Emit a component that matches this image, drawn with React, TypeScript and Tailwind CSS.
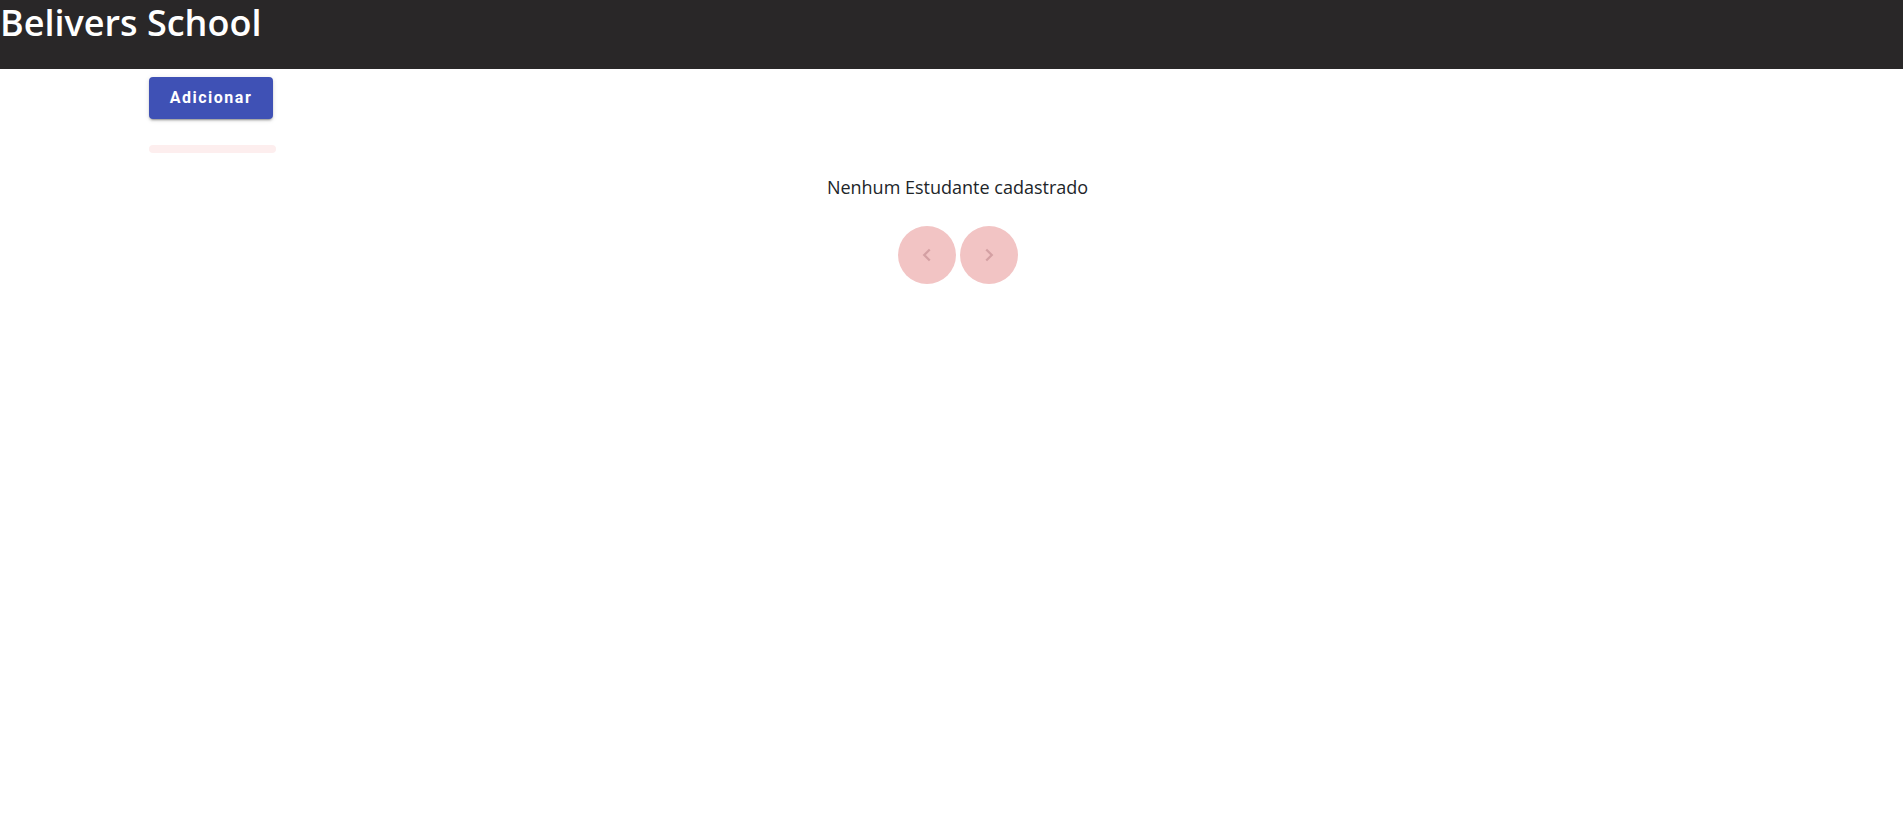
import React from 'react';

const App: React.FC = () => {
  return (
    <div className="min-h-screen bg-white" style={{ fontFamily: '"Open Sans", sans-serif' }}>
      <header className="h-[69px] bg-[#292728]">
        <h1 className="text-[36px] leading-[46px] font-semibold text-white">Belivers School</h1>
      </header>

      <main className="pl-[149px]">
        <button
          type="button"
          className="mt-[8px] h-[42px] w-[124px] rounded-[4px] bg-[#3f51b5] text-[16px] font-bold tracking-[1.5px] text-white shadow-[0_3px_1px_-2px_rgba(0,0,0,0.2),0_2px_2px_0_rgba(0,0,0,0.14),0_1px_5px_0_rgba(0,0,0,0.12)]"
          style={{ fontFamily: 'Roboto, sans-serif' }}
        >
          Adicionar
        </button>

        <div className="mt-[26px] h-[8px] w-[127px] rounded-full bg-[#fdeeee]" />
      </main>

      <div className="pl-[12px] flex flex-col items-center">
        <p className="mt-[21px] text-[18px] leading-[27px] text-[#212529]">Nenhum Estudante cadastrado</p>

        <div className="mt-[25px] flex gap-[4px]">
          <button
            type="button"
            disabled
            className="flex h-[58px] w-[58px] items-center justify-center rounded-full bg-[#f2c4c4]"
          >
            <svg width="22" height="22" viewBox="0 0 24 24" fill="none" stroke="#d4a0a3" strokeWidth="2.5">
              <path d="M15 6l-6 6 6 6" />
            </svg>
          </button>
          <button
            type="button"
            disabled
            className="flex h-[58px] w-[58px] items-center justify-center rounded-full bg-[#f2c4c4]"
          >
            <svg width="22" height="22" viewBox="0 0 24 24" fill="none" stroke="#d4a0a3" strokeWidth="2.5">
              <path d="M9 6l6 6-6 6" />
            </svg>
          </button>
        </div>
      </div>
    </div>
  );
};

export default App;
